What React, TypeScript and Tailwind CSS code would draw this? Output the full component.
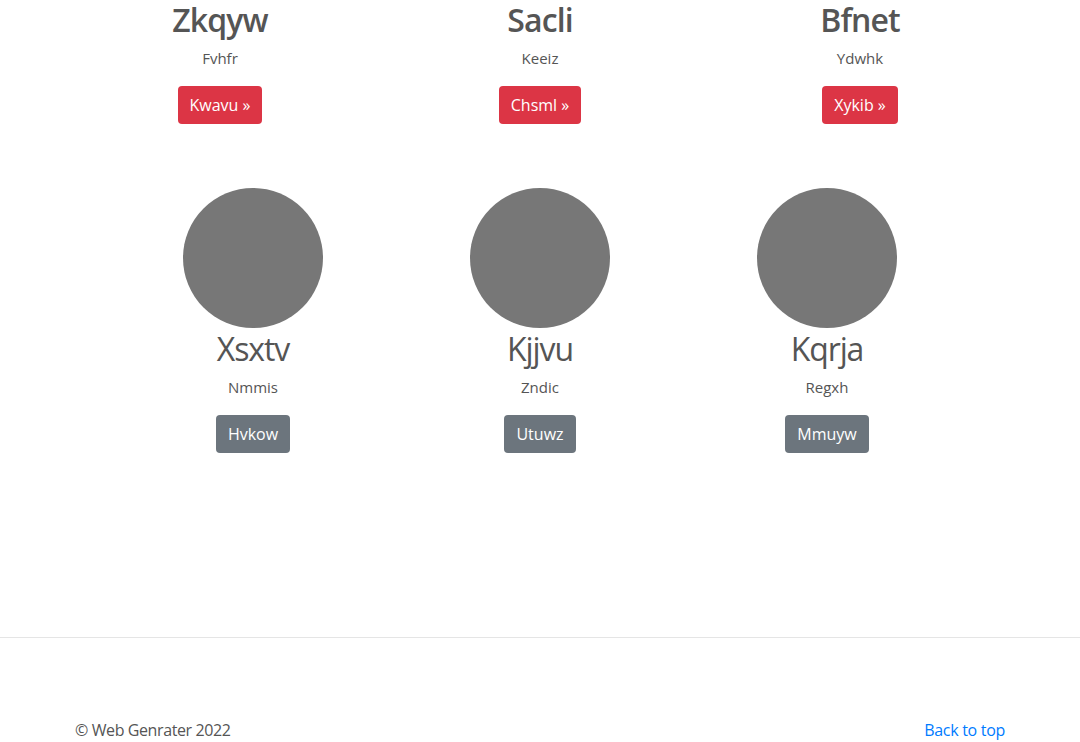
const top = [
  { title: "Zkqyw", text: "Fvhfr", btn: "Kwavu" },
  { title: "Sacli", text: "Keeiz", btn: "Chsml" },
  { title: "Bfnet", text: "Ydwhk", btn: "Xykib" },
];

const people = [
  { name: "Xsxtv", text: "Nmmis", btn: "Hvkow" },
  { name: "Kjjvu", text: "Zndic", btn: "Utuwz" },
  { name: "Kqrja", text: "Regxh", btn: "Mmuyw" },
];

export default function App() {
  return (
    <div className="min-h-[742px] bg-white text-[#555] [font-family:'Open_Sans',sans-serif] overflow-hidden">
      <div className="w-[960px] mx-auto grid grid-cols-3">
        {top.map((c) => (
          <div key={c.title} className="flex flex-col items-center">
            <h2 className="mt-[4px] h-[36px] leading-[32px] text-[32px] tracking-[-0.9px] font-semibold text-[#555]">
              {c.title}
            </h2>
            <p className="mt-[6px] leading-[24px] text-[15px]">{c.text}</p>
            <a className="mt-[16px] h-[38px] px-3 flex items-center rounded bg-[#dc3545] text-white text-[16px]">
              {c.btn} »
            </a>
          </div>
        ))}
      </div>

      <div className="w-[861px] mx-auto grid grid-cols-3 mt-[64px]">
        {people.map((p) => (
          <div key={p.name} className="flex flex-col items-center">
            <div className="w-[140px] h-[140px] rounded-full bg-[#777]" />
            <h2 className="mt-[1px] h-[40px] leading-[40px] text-[32px] tracking-[-1.1px] font-normal text-[#555]">
              {p.name}
            </h2>
            <p className="mt-[6px] leading-[24px] text-[15px]">{p.text}</p>
            <a className="mt-[16px] h-[38px] px-3 flex items-center rounded bg-[#6c757d] text-white text-[16px]">
              {p.btn}
            </a>
          </div>
        ))}
      </div>

      <hr className="mt-[184px] border-0 border-t border-[#e5e5e5]" />

      <footer className="w-[960px] mx-auto px-[15px] mt-[80px] flex justify-between leading-[24px] text-[16px]">
        <p className="tracking-[-0.4px]">© Web Genrater 2022</p>
        <a className="text-[#007bff] tracking-[-0.3px]">Back to top</a>
      </footer>
    </div>
  );
}
